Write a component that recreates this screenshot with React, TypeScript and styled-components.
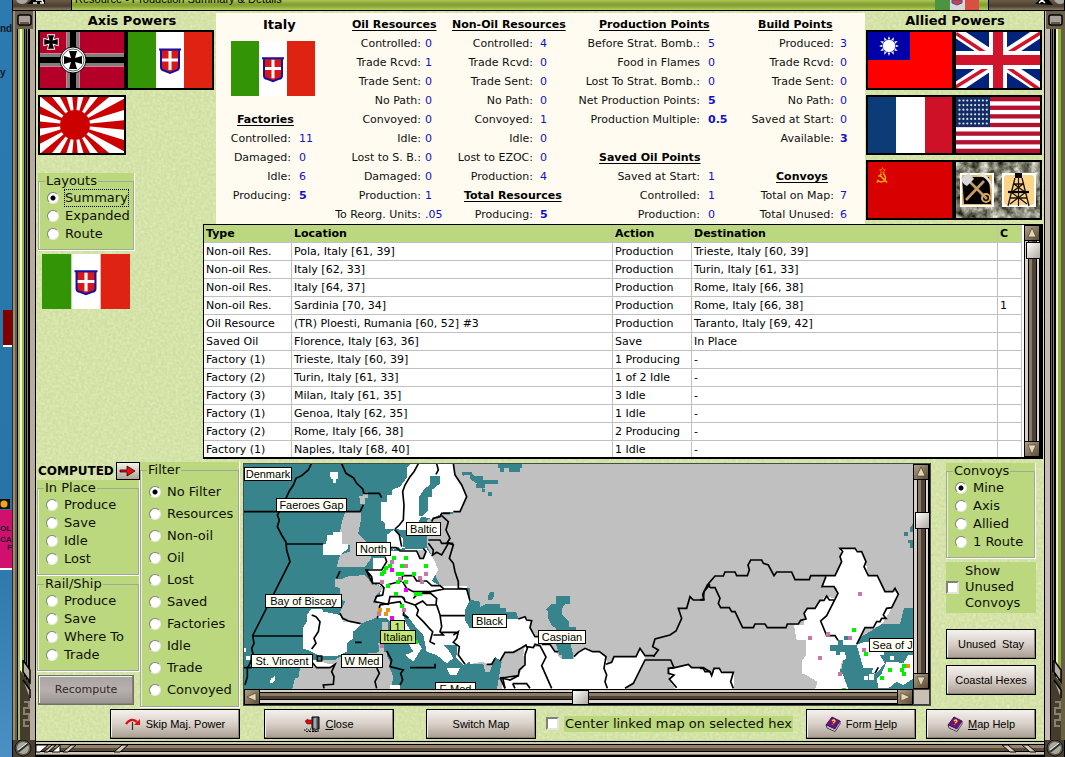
import React from "react";
import styled, { createGlobalStyle } from "styled-components";

const SANS = '"DejaVu Sans", sans-serif';
const UI = '"Liberation Sans", sans-serif';
const PANEL = "#bbd87e";
const SEA = "#38848c";
const LAND = "#c0c0c0";

const GlobalStyle = createGlobalStyle`
  * { box-sizing: border-box; }
  html, body { margin: 0; padding: 0; }
  body { font: 13px/16px ${SANS}; color: #101008; background: #2c78ac; overflow: hidden; }
`;

/* ---------- window shell ---------- */

const Shell = styled.div`
  display: grid;
  grid-template-columns: 12px 24px minmax(0, 1fr) 21px;
  grid-template-rows: 11px minmax(0, 1fr) 17px;
  min-height: 100vh;
`;

const Desktop = styled.div`
  grid-row: 1 / 4;
  position: relative;
  overflow: hidden;
  background: linear-gradient(#2c7ab0, #2874a8 70%, #4a90c4);
`;

const Fragment = styled.span<{ $y: number; $x: number; $size: number }>`
  position: absolute;
  top: ${(p) => p.$y}px;
  left: ${(p) => p.$x}px;
  font: bold ${(p) => p.$size}px/16px ${UI};
  color: #101830;
`;

const Counter = styled.div<{ $y: number; $x: number; $h: number; $c: string }>`
  position: absolute;
  top: ${(p) => p.$y}px;
  left: ${(p) => p.$x}px;
  right: 0;
  height: ${(p) => p.$h}px;
  background: ${(p) => p.$c};
  border-bottom: 2px solid #fff;
`;

const Marker = styled.svg`
  position: absolute;
  top: 499px;
  left: 0;
`;

const TitleBar = styled.header`
  grid-column: 2 / 5;
  display: grid;
  grid-template-columns: 60px minmax(0, 1fr) 77px;
  border-bottom: 1px solid #000;
  overflow: hidden;
`;

const Cap = styled.div`
  background: linear-gradient(#6a5c48, #4a3e2e 60%, #8a7c68);
  border: solid #000;
  border-width: 0 1px;
  overflow: hidden;
  svg { display: block; }
`;

const TitleStrip = styled.div`
  display: flex;
  justify-content: space-between;
  height: 10px;
  padding: 0 9px 0 3px;
  background: linear-gradient(#a8c858, #86a030 40%, #88a434 60%, #b4d060);
  overflow: hidden;
`;

const Title = styled.h1`
  margin: -9px 0 0;
  font: 11px/16px ${UI};
  color: #000;
`;

const Rail = styled.div<{ $right?: boolean }>`
  display: flex;
  flex-direction: column;
  justify-content: space-between;
  align-items: center;
  background: ${(p) =>
    p.$right
      ? "linear-gradient(90deg,#000 0 1px,#c8bcb0 1px 6px,#000 6px 7px,#6a6450 7px 8px,#000 8px 9px,#8a806c 9px 10px,#000 10px 12px,#eef4c8 12px 14px,#94b040 14px 17px,#5a6a20 17px 18px,#6a5e48 18px 21px)"
      : "linear-gradient(90deg,#30281c 0 1px,#9a8e74 1px 3px,#6a5e48 3px 5px,#000 5px 6px,#a8b870 6px 8px,#eef8c8 8px 10px,#98b44c 10px 12px,#000 12px 13px,#6a6450 13px 14px,#000 14px 15px,#8a806c 15px 16px,#000 16px 18px,#b8aca0 18px 23px,#000 23px 24px)"};
  svg { display: block; }
`;

const BottomRail = styled.div`
  grid-column: 3;
  background: linear-gradient(#c8d8a0 0 1px,#000 1px 2px,#d0c8b8 2px 4px,#000 4px 5px,#948468 5px 8px,#5a4a38 8px 11px,#000 11px 12px,#d0c8b8 12px 14px,#8a8070 14px 15px,#000 15px 17px);
  display: flex;
  justify-content: space-between;
  svg { display: block; }
`;

const BottomCorner = styled.div`
  background: #4a4030;
  border: solid #000;
  border-width: 0 1px;
  overflow: hidden;
  svg { display: block; }
`;

const Body = styled.main`
  position: relative;
  background: #cfdfa0;
  overflow: hidden;
`;

const Texture = styled.svg`
  position: absolute;
  inset: 0;
  width: 100%;
  height: 100%;
`;

const Content = styled.div`
  position: relative;
  display: flex;
  flex-direction: column;
  height: 100%;
`;

/* ---------- upper area ---------- */

const Upper = styled.div`
  display: grid;
  grid-template-columns: 167px 13px minmax(0, 1fr) 179px;
  grid-template-rows: auto auto;
`;

const AxisSide = styled.aside`
  grid-column: 1 / 3;
  grid-row: 1 / 3;
  padding-left: 2px;
`;

const AlliedSide = styled.aside`
  grid-column: 4;
  grid-row: 1;
  padding-left: 1px;
`;

const SideTitle = styled.h2<{ $indent?: number }>`
  margin: 0;
  padding: 1px 0 0 ${(p) => p.$indent || 0}px;
  font: bold 13px/18px ${SANS};
  text-align: center;
  color: #000;
`;

const FlagGrid = styled.div`
  display: grid;
  grid-template-columns: 88px 88px;
  gap: 5px 0;
`;

const FlagButton = styled.button`
  width: 88px;
  height: 60px;
  padding: 0;
  border: 2px solid #000;
  background: #808080;
  svg { display: block; width: 84px; height: 56px; }
`;

const StatsPanel = styled.section`
  grid-column: 3;
  grid-row: 1;
  margin-top: 2px;
  padding-top: 2px;
  background: #fffbf0;
  display: flex;
  justify-content: space-between;
`;

const StatColumn = styled.div<{ $label: number; $gap: number; $value: number }>`
  display: grid;
  grid-template-columns: ${(p) => p.$label}px ${(p) => p.$value}px;
  column-gap: ${(p) => p.$gap}px;
  grid-auto-rows: 19px;
  font: 11px/19px ${SANS};
  color: #101010;
  white-space: nowrap;
`;

const StatHead = styled.h3<{ $indent: number; $plain?: boolean }>`
  grid-column: 1 / 3;
  margin: 0;
  padding-left: ${(p) => p.$indent}px;
  font: bold ${(p) => (p.$plain ? 13 : 11)}px/19px ${SANS};
  text-decoration: ${(p) => (p.$plain ? "none" : "underline")};
  text-decoration-thickness: 1px;
  text-underline-offset: 2px;
  color: #000;
`;

const StatLabel = styled.span`
  display: flex;
  justify-content: flex-end;
`;

const StatValue = styled.span<{ $bold?: boolean }>`
  color: #1010c8;
  font-weight: ${(p) => (p.$bold ? "bold" : "normal")};
`;

const StatFlag = styled.div`
  grid-column: 1 / 3;
  grid-row: span 4;
  padding: 7px 0 0 15px;
  svg { display: block; width: 84px; height: 55px; }
`;

const StatGap = styled.div`
  grid-column: 1 / 3;
`;

/* ---------- groups and inputs ---------- */

const Panel = styled.div<{ $mt?: number; $w?: number }>`
  background: ${PANEL};
  margin-top: ${(p) => p.$mt || 0}px;
  width: ${(p) => (p.$w ? p.$w + "px" : "auto")};
  border-bottom: 1px solid #fff;
  border-right: 1px solid #fff;
`;

const Group = styled.fieldset<{ $row: number }>`
  margin: 0;
  min-width: 0;
  padding: ${(p) => (p.$row > 20 ? "3px 0 5px 8px" : "0 0 6px 8px")};
  border: 1px solid #a0a898;
  box-shadow: inset 1px 0 #e8f0d0;
  label { height: ${(p) => p.$row}px; }
`;

const Legend = styled.legend`
  margin-left: -2px;
  padding: 0 1px;
  font: 13px/16px ${SANS};
`;

const RadioRow = styled.label`
  display: flex;
  align-items: center;
  gap: 6px;
  white-space: nowrap;
`;

const RadioDot = styled.input`
  appearance: none;
  flex: none;
  width: 12px;
  height: 12px;
  margin: 0;
  border-radius: 50%;
  border: 1px solid;
  border-color: #808080 #e8e8e0 #e8e8e0 #808080;
  background: #fff;
  &:checked { background: radial-gradient(circle, #000 0 2px, #fff 3px); }
`;

const RadioText = styled.span<{ $focus?: boolean }>`
  outline: ${(p) => (p.$focus ? "1px dotted #000" : "none")};
`;

const Check = styled.input`
  appearance: none;
  flex: none;
  width: 13px;
  height: 13px;
  margin: 0;
  border: 2px solid;
  border-color: #808080 #e4e4dc #e4e4dc #808080;
  background: #fff;
`;

const PlainFlag = styled.div`
  margin: 3px 0 0 4px;
  svg { display: block; width: 88px; height: 55px; }
`;

/* ---------- table ---------- */

const TableBox = styled.section`
  grid-column: 2 / 5;
  grid-row: 2;
  display: flex;
  justify-content: space-between;
  height: 235px;
  margin-right: 1px;
  border: solid #000;
  border-width: 1px 2px 2px 1px;
  background: #fff;
  overflow: hidden;
`;

const Table = styled.table`
  flex: 1;
  min-width: 0;
  table-layout: fixed;
  border-collapse: separate;
  border-spacing: 0;
  font: 11px/17px ${SANS};
  color: #000;
  th, td {
    height: 18px;
    padding: 0 2px;
    text-align: left;
    white-space: nowrap;
    border-right: 1px solid #c0c0c0;
    border-bottom: 1px solid #c0c0c0;
  }
  th { background: ${PANEL}; font-weight: bold; }
`;

const Col = styled.col<{ $w: string }>`
  width: ${(p) => p.$w};
`;

/* ---------- scroll bars ---------- */

const VBar = styled.div<{ $thumb: number }>`
  position: relative;
  flex: none;
  width: 17px;
  margin-left: 2px;
  display: flex;
  flex-direction: column;
  justify-content: space-between;
  background: linear-gradient(90deg,#000 0 1px,#d8d0c4 1px 4px,#000 4px 5px,#8a7a64 5px 8px,#4e4232 8px 12px,#000 12px 13px,#e0d8d0 13px 15px,#000 15px 17px);
  &::after {
    content: "";
    position: absolute;
    left: 2px;
    top: ${(p) => p.$thumb}px;
    width: 13px;
    height: 15px;
    border: 1px solid #000;
    background: linear-gradient(135deg, #fff, #b0a8a0);
  }
`;

const HBar = styled.div`
  position: relative;
  flex: 1;
  display: flex;
  justify-content: space-between;
  background: linear-gradient(#000 0 1px,#d8d0c4 1px 3px,#000 3px 4px,#8a7a64 4px 7px,#4e4232 7px 10px,#000 10px 11px,#e0d8d0 11px 14px,#000 14px 16px);
  &::after {
    content: "";
    position: absolute;
    left: 49%;
    top: 1px;
    width: 15px;
    height: 13px;
    border: 1px solid #000;
    background: linear-gradient(135deg, #fff, #b0a8a0);
  }
`;

const ArrowBtn = styled.button`
  width: 16px;
  height: 16px;
  padding: 0;
  border: 1px solid #000;
  background: linear-gradient(135deg, #b0a084, #5a4c38);
  svg { display: block; width: 14px; height: 14px; }
`;

/* ---------- lower area ---------- */

const Lower = styled.div`
  flex: 1;
  min-height: 249px;
  display: grid;
  grid-template-columns: 104px 100px minmax(0, 1fr) 113px;
  padding-top: 3px;
`;

const LeftTools = styled.div`
  padding-left: 1px;
`;

const ComputedRow = styled.div`
  display: flex;
  justify-content: space-between;
  align-items: center;
  padding-left: 1px;
  height: 18px;
  font: bold 12px/16px ${SANS};
  color: #000;
`;

const Btn = styled.button<{ $w?: number; $font?: string; $gray?: boolean }>`
  display: flex;
  align-items: center;
  justify-content: center;
  gap: 5px;
  flex: none;
  width: ${(p) => (p.$w ? p.$w + "px" : "100%")};
  height: 30px;
  padding: 0;
  border: 1px solid ${(p) => (p.$gray ? "#707068" : "#000")};
  box-shadow: inset -1px -1px #8a8078, inset 1px 1px #f4f0ec;
  background: ${(p) =>
    p.$gray
      ? "linear-gradient(#a8a4a4, #b8b0ac 50%, #989494)"
      : "linear-gradient(#f4f0ec, #d8d0c8 50%, #a89c90)"};
  font: 11px/14px ${(p) => p.$font || UI};
  color: ${(p) => (p.$gray ? "#302828" : "#000")};
  white-space: pre;
`;

const ArrowGo = styled.button`
  width: 24px;
  height: 18px;
  padding: 0;
  border: 1px solid #000;
  background: linear-gradient(#f4f0ec, #b0a498);
  svg { display: block; margin: auto; }
`;

const RecomputeWrap = styled.div`
  padding: 3px 6px 0 1px;
`;

const MapBox = styled.section`
  display: flex;
  flex-direction: column;
  margin: 1px 0 2px 3px;
  border: 1px solid #405048;
  overflow: hidden;
`;

const MapRow = styled.div`
  flex: 1;
  min-height: 0;
  display: flex;
`;

const MapSvg = styled.svg`
  flex: 1;
  min-width: 0;
  height: 100%;
  display: block;
  background: ${LAND};
  text { font: 11px ${UI}; fill: #000; text-anchor: middle; }
`;

const MapVBar = styled(VBar)`
  margin-left: 0;
`;

const HRow = styled.div`
  display: flex;
  flex: none;
  height: 16px;
`;

const Corner = styled.div`
  width: 17px;
  background: #c8c0b4;
  border: 1px solid #403830;
`;

const RightTools = styled.div`
  padding: 1px 8px 0 15px;
`;

const ShowUnused = styled.label`
  display: flex;
  align-items: center;
  gap: 6px;
  margin: 3px 0 16px;
  padding: 1px 0 2px;
  background: ${PANEL};
  line-height: 16px;
`;

const Stack = styled.div`
  display: flex;
  flex-direction: column;
  gap: 6px;
`;

const ActionBar = styled.footer`
  display: flex;
  align-items: center;
  height: 32px;
  padding: 0 8px 1px 74px;
`;

const BtnGroup = styled.div<{ $gap: number; $ml: string }>`
  display: flex;
  align-items: center;
  gap: ${(p) => p.$gap}px;
  margin-left: ${(p) => p.$ml};
`;

const CenterLabel = styled.label`
  display: flex;
  align-items: center;
  gap: 5px;
  white-space: nowrap;
  span { background: ${PANEL}; padding: 0 1px; }
`;

/* ---------- flags ---------- */

const Italy = () => (
  <svg viewBox="0 0 84 56" preserveAspectRatio="none">
    <rect width="84" height="56" fill="#fff" />
    <rect width="28" height="56" fill="#339406" />
    <rect x="56" width="28" height="56" fill="#de2312" />
    <path d="M31 17.500H53M33 18V35Q33 38 36 38.500L42 41L48 38.500Q51 38 51 35V18" fill="#d81818" stroke="#1810a0" strokeWidth="2" />
    <path d="M42 19V38M34 28H50" stroke="#fff" strokeWidth="3" />
  </svg>
);

const cross = "M-2 -2L-4 -9H4L2 -2L9 -4V4L2 2L4 9H-4L-2 2L-9 4V-4Z";

const Germany = () => (
  <svg viewBox="0 0 84 56">
    <rect width="84" height="56" fill="#b40028" />
    <path d="M33 0V56M0 28H84" stroke="#fff" strokeWidth="13" />
    <path d="M33 0V56M0 28H84" stroke="#000" strokeWidth="11" />
    <path d="M33 0V56M0 28H84" stroke="#fff" strokeWidth="9" />
    <path d="M33 0V56M0 28H84" stroke="#000" strokeWidth="7" />
    <circle cx="33" cy="28" r="13" fill="#fff" stroke="#000" />
    <circle cx="33" cy="28" r="11" fill="#fff" stroke="#606060" />
    <path d={cross} transform="translate(33 28)" fill="#000" />
    <path d={cross} transform="translate(11 10) scale(.75)" fill="#000" stroke="#fff" strokeWidth="2.500" paintOrder="stroke" />
  </svg>
);

const Japan = () => {
  const rays = Array.from({ length: 16 }, (_, i) => {
    const a = ((i * 22.5 - 5.6) * Math.PI) / 180;
    const b = ((i * 22.5 + 5.6) * Math.PI) / 180;
    return `M35 28L${35 + 90 * Math.cos(a)} ${28 + 90 * Math.sin(a)}L${35 + 90 * Math.cos(b)} ${28 + 90 * Math.sin(b)}Z`;
  }).join("");
  return (
    <svg viewBox="0 0 84 56">
      <rect width="84" height="56" fill="#fff" />
      <path d={rays} fill="#cc0000" />
      <circle cx="35" cy="28" r="15" fill="#cc0000" />
    </svg>
  );
};

const China = () => {
  const pts = Array.from({ length: 24 }, (_, i) => {
    const r = i % 2 ? 6 : 10;
    const a = (i * Math.PI) / 12;
    return `${21 + r * Math.sin(a)},${14 - r * Math.cos(a)}`;
  }).join(" ");
  return (
    <svg viewBox="0 0 84 56">
      <rect width="84" height="56" fill="#fe0000" />
      <rect width="42" height="28" fill="#0000a8" />
      <polygon points={pts} fill="#fff" />
      <circle cx="21" cy="14" r="6.500" fill="none" stroke="#0000a8" strokeWidth=".7" />
      <circle cx="21" cy="14" r="5.800" fill="#fff" />
    </svg>
  );
};

const Britain = () => (
  <svg viewBox="0 0 84 56">
    <rect width="84" height="56" fill="#00247d" />
    <path d="M0 0L84 56M84 0L0 56" stroke="#fff" strokeWidth="11" />
    <path d="M0 1.500L40 28M86 0L44 26M-2 56L40 30M84 58L44 30" stroke="#cf142b" strokeWidth="3.500" />
    <path d="M42 0V56M0 28H84" stroke="#fff" strokeWidth="18" />
    <path d="M42 0V56M0 28H84" stroke="#cf142b" strokeWidth="10" />
  </svg>
);

const France = () => (
  <svg viewBox="0 0 84 56">
    <rect width="84" height="56" fill="#fff" />
    <rect width="28" height="56" fill="#0c3c78" />
    <rect x="57" width="27" height="56" fill="#ce1126" />
  </svg>
);

const America = () => (
  <svg viewBox="0 0 84 56">
    <rect width="84" height="56" fill="#fff" />
    {[0, 1, 2, 3, 4, 5, 6].map((i) => (
      <rect key={i} y={i * 8.62} width="84" height="4.300" fill="#b41030" />
    ))}
    <rect width="34" height="30" fill="#142c64" />
    {Array.from({ length: 48 }, (_, i) => (
      <circle key={i} cx={3.5 + (i % 8) * 3.9} cy={3.5 + Math.floor(i / 8) * 4.6} r="1.100" fill="#d8e0f0" />
    ))}
  </svg>
);

const Soviet = () => (
  <svg viewBox="0 0 84 56">
    <rect width="84" height="56" fill="#d80000" />
    <path d="M14.500 5.500L15.300 7.800H17.500L15.800 9.200L16.300 11.300L14.500 10L12.700 11.300L13.200 9.200L11.500 7.800H13.700Z" fill="none" stroke="#ff9000" strokeWidth=".7" />
    <path d="M15 11.500Q19.500 15.500 16 19Q13 21 10 18.500L9 20.500M10.500 14.500L13.500 12M12 13.500L19 20.500" fill="none" stroke="#ffc000" strokeWidth="1.400" />
  </svg>
);

const Industry = () => (
  <svg viewBox="0 0 84 56">
    <filter id="rock" x="0" y="0" width="1" height="1" colorInterpolationFilters="sRGB">
      <feTurbulence type="fractalNoise" baseFrequency=".12" numOctaves="4" seed="4" />
      <feColorMatrix values="1.3 0 0 0 -.12 1.300 0 0 0 -.12 1.300 0 0 0 -.18 0 0 0 0 1" />
    </filter>
    <rect width="84" height="56" filter="url(#rock)" />
    <rect x="4" y="11" width="34" height="34" fill="#fff" />
    <rect x="6" y="13" width="30" height="30" fill="#e8b860" />
    <path d="M6 15H33L35 42H8Z" fill="#000" />
    <path d="M10 38L28 19M14 20L31 37" stroke="#c89c60" strokeWidth="2.600" />
    <path d="M5 16L13 11L18 17L11 24Q6 22 5 16Z" fill="#d8d8d8" />
    <path d="M20 13Q32 14 36 28L36 23Q33 13 25 11Z" fill="#e4e4e4" />
    <circle cx="30" cy="36" r="4" fill="none" stroke="#d8a868" strokeWidth="2" />
    <rect x="46" y="11" width="34" height="34" fill="#fff" />
    <rect x="48" y="13" width="30" height="30" rx="3" fill="#fcd488" />
    <path d="M59 11H66V16H59Z" fill="#000" />
    <path d="M59 16L52 44M66 16L73 44M58 22L69 30M67 22L56 30M55 30L71 42M70 30L54 42M57 22H68M54 36H71" fill="none" stroke="#181008" strokeWidth="1.300" />
    <path d="M52 30H73" stroke="#000" strokeWidth="2.200" />
    <path d="M62.500 12V44" stroke="#181008" strokeWidth="1.200" />
  </svg>
);

/* ---------- small drawings ---------- */

const Screw = () => (
  <svg width="21" height="17" viewBox="0 0 21 17">
    <circle cx="10" cy="8" r="8" fill="#585850" stroke="#181410" />
    <circle cx="10" cy="8" r="6" fill="#a8a8a0" />
    <path d="M5 12L15 4" stroke="#303028" strokeWidth="2" />
    <path d="M5 10L14 3" stroke="#e8e8e0" />
  </svg>
);

const Bolt = () => (
  <svg width="18" height="18" viewBox="0 0 18 18">
    <path d="M0 0H18V18H0Z" fill="#6a5e4c" />
    <rect x="3" y="4" width="13" height="10" rx="2" fill="#a8a098" stroke="#000" strokeWidth="1.500" />
    <path d="M5 12H14" stroke="#605848" strokeWidth="2" />
  </svg>
);

const Ratchet = () => (
  <svg width="20" height="80" viewBox="0 0 20 80">
    <path d="M6 10L16 24V80H6Z" fill="#443c2c" />
    <path d="M9 0L16 10V22L9 12ZM9 20L16 30V38" fill="#b8b0a0" stroke="#000" strokeWidth="1.500" />
    <path d="M10 42H15V48H10V54H15V60H10V66H15" fill="none" stroke="#8a8070" strokeWidth="2" />
  </svg>
);

const Slashes = () => (
  <svg width="130" height="17" viewBox="0 0 130 17">
    <path d="M0 5H12L4 12H0ZM16 12L24 5V12Z" fill="#fff" stroke="#000" />
    <path d="M8 12L16 5H20L12 12ZM27 12L35 5H40L32 12ZM78 12L86 5H92L84 12Z" fill="#d0c8b8" stroke="#000" />
  </svg>
);

const SlashesRight = () => (
  <svg width="42" height="17" viewBox="0 0 42 17">
    <path d="M0 5H6L14 12H8ZM20 5H26L34 12H28Z" fill="#d0c8b8" stroke="#000" />
  </svg>
);

const Tri = ({ d }: { d: string }) => (
  <svg viewBox="0 0 14 14">
    <path d={d} fill="#e4d8b4" stroke="#403420" strokeWidth=".6" />
  </svg>
);
const UP = "M7 2L11 11H3Z";
const DOWN = "M7 12L11 3H3Z";
const LEFT = "M2 7L11 3V11Z";
const RIGHT = "M12 7L3 3V11Z";

const SkipIcon = () => (
  <svg width="16" height="14" viewBox="0 0 16 14">
    <path d="M1 7Q6 0 12 5" fill="none" stroke="#e01010" strokeWidth="2.400" />
    <path d="M15 2V8H9Z" fill="#e01010" />
    <path d="M7.500 5V13" stroke="#303030" strokeWidth="1.200" />
  </svg>
);

const DoorIcon = () => (
  <svg width="16" height="16" viewBox="0 0 16 16">
    <path d="M8 1H15V13H8Z" fill="#585860" stroke="#000" />
    <path d="M9 2L13 1V14L9 12Z" fill="#a0a8b0" stroke="#202020" strokeWidth=".7" />
    <path d="M1 5L4 3V4H8V8H5L3 8Z" fill="#d01010" stroke="#600" strokeWidth=".5" />
    <path d="M0 14H2V13H4V14H6V13H8V14H10V15H15M2 15.500H13" stroke="#000" strokeDasharray="2 1" fill="none" />
    <path d="M1 13H8" stroke="#fff" strokeDasharray="1 1" />
  </svg>
);

const BookIcon = () => (
  <svg width="16" height="16" viewBox="0 0 16 16">
    <path d="M1 9L7 1L15 5L10 13Z" fill="#70107c" stroke="#2c0030" strokeWidth=".8" />
    <path d="M1 9L10 13L15 5V8L10 15.500L2 12Z" fill="#e8e8f0" stroke="#301038" strokeWidth=".8" />
    <path d="M2 10.500L10 14.200L15 7" stroke="#8888a0" strokeWidth=".6" fill="none" />
    <path d="M7 5Q9 3 10 5Q10 6 8 7M7.500 8.500V9" stroke="#ffd820" strokeWidth="1.400" fill="none" />
  </svg>
);

/* ---------- map ---------- */

type Dot = [number, number, string];
const G = "#00f000";
const P = "#c878a8";
const M = "#f000f0";
const O = "#e09810";

const westDots: Dot[] = [
  [456, 303, G], [492, 303, G], [450, 315, P], [444, 327, G], [432, 333, G], [426, 345, G], [420, 351, G], [480, 327, G], [492, 327, P],
  [450, 339, M], [468, 351, G], [480, 351, G], [516, 351, G], [552, 327, G], [552, 351, P], [534, 363, P], [540, 375, P], [474, 366, P],
  [492, 375, G], [468, 375, G], [438, 387, G], [420, 375, P], [492, 399, M], [462, 411, G], [522, 411, G], [534, 411, G], [480, 447, G],
  [486, 459, P], [414, 459, O], [438, 459, O], [432, 471, O], [410, 471, P], [450, 483, M], [420, 567, P], [522, 555, G],
];
const eastDots: Dot[] = [
  [474, 411, P], [456, 519, G], [378, 531, P], [324, 543, P], [444, 543, P], [486, 579, P], [492, 591, G], [354, 603, P], [414, 651, P],
  [564, 639, G], [606, 627, G], [600, 639, G], [606, 651, G], [618, 627, O], [540, 663, G], [426, 698, G],
];

const Dots = ({ list }: { list: Dot[] }) => (
  <>
    {list.map(([x, y, c], i) => (
      <rect key={i} x={x} y={y} width="12" height="12" fill={c} />
    ))}
  </>
);

const labels: [string, number, number, number, string?][] = [
  ["Denmark", 0, 3, 47],
  ["Faeroes Gap", 32, 34, 70],
  ["Baltic", 162, 58, 34],
  ["North", 112, 78, 34],
  ["Bay of Biscay", 21, 130, 76],
  ["Black", 228, 150, 34],
  ["Caspian", 294, 166, 47],
  ["St. Vincent", 7, 190, 61],
  ["W Med", 97, 190, 41],
  ["E Med", 191, 218, 40],
  ["1", 146, 156, 14, "#c4e878"],
  ["Italian", 136, 166, 35, "#c4e878"],
  ["Sea of J", 625, 174, 46],
];

const WorldMap = () => (
  <MapSvg viewBox="0 0 669 225" preserveAspectRatio="xMinYMin slice" role="img" aria-label="Resource map">
    <g transform="translate(-4 -9) scale(.33333)" shapeRendering="crispEdges">
      <path d="M12 26H640V176L620 190V260L640 300V400H690V706H12Z" fill={SEA} />
      <path d="M560 195L605 178H640V340L655 400L600 392L590 370L575 300L560 270V240Z" fill={LAND} />
      <path d="M512 26H640L645 60L665 90L680 125L660 170L610 172L575 192L545 184L536 200L540 270L480 282L440 240L465 222H435V205L422 195V140H440V120H455V105L480 95L500 68V40Z" fill="#fff" />
      <path d="M570 62H600V85L575 105V125H565V165L550 182H537V125L555 100L570 90Z" fill={SEA} />
      <path d="M455 222L490 250V275L510 285L540 275L560 240L500 240V225Z" fill={SEA} />
      <path d="M440 240L460 230L478 245L485 270L460 285L440 262Z" fill="#fff" />
      <path d="M270 50H295V72H288V85H280V72H272Z" fill="#fff" />
      <path d="M358 122H370V110H384V130H375V148H360Z" fill={LAND} />
      <path d="M315 172H362V200L355 235L378 260L360 300H392V312L375 335H290L300 300L330 290V270L302 268L300 230L306 200Z" fill={LAND} />
      <path d="M262 240H278V232H305V268H325V280L300 300H248V268H258Z" fill="#fff" />
      <path d="M380 345L400 340V310H430L450 290L500 283L560 280L580 310L595 345L575 378L600 392H680L690 437L680 470V495L700 520V550L690 620L672 630L650 610L640 570L620 575L640 610L620 625L590 600L560 590L550 540L530 520L500 480L490 470L495 500L545 580L520 620L495 600L520 590L490 540L440 490L412 490V455L400 440L420 420L425 395L395 380Z" fill="#fff" />
      <path d="M285 372H305L320 365L375 360L395 385L430 398L405 425L418 455L412 487L360 507L310 500L300 470L316 440L300 430V400L285 395Z" fill={LAND} />
      <path d="M214 462H245L250 470L300 480L310 500L365 507L340 530V550L320 565V590L290 604H240L215 590L188 580V520L200 500V480Z" fill="#fff" />
      <path d="M535 285H555V305H535Z" fill={LAND} />
      <path d="M415 565H432V590H442V615H420ZM425 500H445V525H425Z" fill={LAND} />
      <path d="M180 640L215 616H285L300 605L435 590L450 620V640L460 665L455 690L480 706H156L165 670H175Z" fill={LAND} />
      <path d="M215 616H245L255 625L285 628L270 640H225Z" fill="#fff" />
      <path d="M450 690H480V702H450ZM620 640H660L650 660H630ZM92 672L105 662V675L98 685H90ZM12 578H18V590H12ZM18 602H30V614H18Z" fill="#fff" />
      <path d="M610 570H650V600H640L625 585ZM665 50H695V62L720 68V75L700 72L690 60L668 62Z" fill={SEA} />
      <path d="M690 435L675 465V495L690 520H720V440Z" fill={SEA} />
      <g fill="none" stroke="#000" strokeWidth="5" shapeRendering="auto">
        <path d="M214 26L205 45L185 62L168 70L160 90L148 108L138 130L118 170L112 180L118 195L112 215L125 240L138 262L140 285L150 320L38 542L42 565L35 580L40 600L30 625L22 640V665L15 690" />
        <path d="M12 170H360L370 150M305 26L318 55L340 68L350 85L368 102L372 115H418L425 128M138 267H250M38 543H188M12 638H35" />
        <path d="M535 26L522 50L510 65L495 90L488 110L492 150L490 195L478 210L465 222M465 225L478 240L485 275M590 26L595 45L588 58M640 26L645 60L665 90L680 125L660 170H640M630 175H605L600 185L580 190L575 200M605 182L625 200L618 225L630 250L622 262L640 270L628 310L640 325L645 350L655 380V400L680 402L690 437" />
        <path d="M565 255H600L605 265H640M565 265L580 285L578 300L590 292L605 300L625 265M450 278H468L480 288H530L540 310H550L558 290L550 280M435 305L440 320L425 345H378L398 385H420L432 398L428 420L410 424L403 440L445 448L450 425H485L495 435M378 345L395 365L398 388M300 348L290 370" />
        <path d="M485 375L488 362H520L530 378H560L575 392H600L612 402L572 410H520L500 400L488 380M612 402H680M520 430L535 415H572L590 430L588 450H560L548 438L525 450L495 440L490 425M590 450L600 480L605 515L600 530L610 540H580M600 482H675M600 532H650M525 450L535 465L530 480L550 500L568 520L578 530L570 560L585 568M412 490L420 450L480 440L492 465L490 480L505 488" />
        <path d="M640 540L655 530L650 550L640 562L658 575L655 600L675 628M215 480L228 485L240 500L235 530L222 550L228 565L215 582M300 475L308 490L325 498L362 506M232 603H245V618H232ZM215 620L230 638H270L285 628L275 650L282 665L280 688L250 690L252 700M410 638L418 655L405 680L410 700M440 588L455 615L450 635L490 645L482 655L488 675L480 690M510 638H585V626" />
        <path d="M345 562H365M440 390L485 378" />
      </g>
      <Dots list={westDots} />
    </g>
    <g transform="translate(226 -9) scale(.33333)" shapeRendering="crispEdges">
      <path d="M84 26H155V38H150V50H118V40H102V50H90V38H84ZM0 52L12 62H40V74H84V86H46V98H36L46 104V110H36V98H18V88H24L0 72ZM54 111H66V122H54ZM60 411H72V422L66 434H54V424ZM0 435H12V447H24V458L48 447H90V460H108V470H138L145 492H0ZM258 423H300V447H285L276 460V480L298 500V515H318V525L300 560L310 600V612H275V600L258 570V520L246 512L234 490V470L228 465L246 447H258Z" fill={SEA} />
      <path d="M0 518H105L110 492H145L162 485L185 500L180 518L205 550V566L190 575L165 572L145 588L105 592L90 618L50 628L40 620L0 627Z" fill="#fff" />
      <path d="M0 627H40L45 650H60L75 606L95 620L90 650L80 706H0Z" fill={SEA} />
      <path d="M165 572L190 575H205L215 568L240 570L255 590L275 612H310L325 592L345 580L368 590H388L408 605L412 628L425 622L432 605H498L510 580L525 602V615L490 685L465 706H95V685L98 665L145 660L165 630L160 600Z" fill="#fff" />
      <path d="M600 640L655 628L665 638H700L720 655V706H620L600 680Z" fill="#fff" />
      <path d="M258 568H300L310 600V612H276V600H268Z" fill={SEA} />
      <g fill="none" stroke="#000" strokeWidth="5" shapeRendering="auto">
        <path d="M145 492L165 485L170 495L185 497L180 518L195 545H210M50 628H65L75 610M90 618L105 592H130L155 578L168 570L172 580L165 600V630L148 645L145 662L98 668L105 700M170 575L190 578L195 568L210 572L228 606L215 632L245 700M215 568H240L255 590H265M312 605L325 592L345 580L368 590H388L408 605L402 640L410 660L405 680L412 700M408 628L425 622L432 605H498L510 580L525 602H555" />
        <path d="M465 700L490 685L525 615H602L612 638L595 640V655L612 660L598 672L620 698M605 640L655 628L665 638H700L720 650M550 605L565 585L548 575L555 552L600 540L618 528L635 490L625 460H650L660 425L670 435H700L702 410L720 388M90 668L105 700M128 686H170L180 700M128 686L135 700M90 668L120 675L145 662" />
      </g>
    </g>
    <g transform="translate(456 -9) scale(.33333)" shapeRendering="crispEdges">
      <path d="M612 231H624V243H612ZM630 219L640 205V279H630V265H624V255H640V231H630ZM612 460H640V706H350V670L430 640V570L460 560L545 508H600Z" fill={SEA} />
      <path d="M282 510H312V495L320 460H345L375 425L412 430V400H368L378 363H405L425 320L420 280H465L490 295L498 325L505 362H535L555 410H578L595 415L585 440L558 490L545 508L520 520L495 518L470 568L500 560L540 575V600L555 625L530 655L510 658L520 640H485L480 610L460 580H430L440 610L425 620L420 650L432 660L445 706H345L352 680L318 660L305 655V620L318 600V555H290Z" fill="#fff" />
      <path d="M390 570H415V556H430V570H470L490 640L530 660L510 702H445L425 650V630L450 610V590H420V600H408V588H390ZM432 543H455V554H432Z" fill={SEA} />
      <path d="M570 603H582V615H570ZM492 663H504V675H492ZM530 672L545 655L560 620H585L610 625L625 600H640V670L610 690L590 680L565 700L535 698ZM508 658H522V675H508ZM538 585H552V600H538Z" fill="#fff" />
      <path d="M0 640H12L20 655H40L45 640H60L70 652H102V706H0Z" fill="#fff" />
      <g fill="none" stroke="#000" strokeWidth="5" shapeRendering="auto">
        <path d="M0 434H12L8 418L22 390L45 363H70L75 351H105L110 362H142L148 345L144 330L152 315H185L190 325L205 330L222 362L230 351H275L285 374H328L332 362H405L425 320L420 305L428 290L420 280H465L472 290H485L498 320L492 335L505 362H532L555 410H578L585 400L595 418L575 458L560 460L550 480L558 490H545L540 500H530L520 518H495L470 568" />
        <path d="M22 390L32 398H45L60 430L55 445L62 458H88L95 470H105L128 518H160L165 507H195L202 518H258L262 507H295L302 496L318 492L312 475L322 460H345L360 436H372L380 423L388 435H402M378 364L366 395H402L414 415L380 482L362 498L380 542H405L414 556M0 640H10L15 650H30L35 662L42 640H58L65 652H100L92 680L100 700M525 655L535 637" />
      </g>
      <Dots list={eastDots} />
    </g>
    {labels.map(([t, x, y, w, fill]) => (
      <g key={t}>
        <rect x={x + 0.5} y={y + 0.5} width={w} height="13" fill={fill || "#fffff4"} stroke="#000" />
        <text x={x + w / 2 + 0.5} y={y + 11}>{t}</text>
      </g>
    ))}
  </MapSvg>
);

/* ---------- data ---------- */

type Line = [string, string, boolean?];
const Lines = ({ rows }: { rows: Line[] }) => (
  <>
    {rows.map(([l, v, b]) => (
      <React.Fragment key={l}>
        <StatLabel>{l}</StatLabel>
        <StatValue $bold={b}>{v}</StatValue>
      </React.Fragment>
    ))}
  </>
);

const tableRows = [
  ["Non-oil Res.", "Pola, Italy [61, 39]", "Production", "Trieste, Italy [60, 39]", ""],
  ["Non-oil Res.", "Italy [62, 33]", "Production", "Turin, Italy [61, 33]", ""],
  ["Non-oil Res.", "Italy [64, 37]", "Production", "Rome, Italy [66, 38]", ""],
  ["Non-oil Res.", "Sardinia [70, 34]", "Production", "Rome, Italy [66, 38]", "1"],
  ["Oil Resource", "(TR) Ploesti, Rumania [60, 52] #3", "Production", "Taranto, Italy [69, 42]", ""],
  ["Saved Oil", "Florence, Italy [63, 36]", "Save", "In Place", ""],
  ["Factory (1)", "Trieste, Italy [60, 39]", "1 Producing", "-", ""],
  ["Factory (2)", "Turin, Italy [61, 33]", "1 of 2 Idle", "-", ""],
  ["Factory (3)", "Milan, Italy [61, 35]", "3 Idle", "-", ""],
  ["Factory (1)", "Genoa, Italy [62, 35]", "1 Idle", "-", ""],
  ["Factory (2)", "Rome, Italy [66, 38]", "2 Producing", "-", ""],
  ["Factory (1)", "Naples, Italy [68, 40]", "1 Idle", "-", ""],
];

interface RadioGroupProps {
  title: string;
  items: string[];
  checked?: string;
  focus?: string;
  row?: number;
  mt?: number;
  w?: number;
}

const RadioGroup = ({ title, items, checked, focus, row = 18, mt, w }: RadioGroupProps) => (
  <Panel $mt={mt} $w={w}>
    <Group $row={row}>
      <Legend>{title}</Legend>
      {items.map((t) => (
        <RadioRow key={t}>
          <RadioDot type="radio" name={title} defaultChecked={t === checked} />
          <RadioText $focus={t === focus}>{t}</RadioText>
        </RadioRow>
      ))}
    </Group>
  </Panel>
);

export default function App() {
  return (
    <>
      <GlobalStyle />
      <Shell>
        <Desktop>
          <Fragment $x={0} $y={21} $size={10}>nd</Fragment>
          <Fragment $x={0} $y={65} $size={10}>y</Fragment>
          <Counter $x={3} $y={310} $h={37} $c="#800000" />
          <Marker width="10" height="10" viewBox="0 0 10 10">
            <rect width="10" height="10" fill="#181008" />
            <circle cx="4" cy="5" r="3.500" fill="#f0a818" />
          </Marker>
          <Counter $x={0} $y={510} $h={60} $c="#d0106c" />
          <Fragment $x={0} $y={521} $size={8}>OL</Fragment>
          <Fragment $x={0} $y={532} $size={8}>CA</Fragment>
          <Fragment $x={7} $y={540} $size={8}>F</Fragment>
        </Desktop>

        <TitleBar>
          <Cap>
            <svg width="60" height="10" viewBox="0 0 60 10">
              <circle cx="9" cy="-2" r="6" fill="#a8a8a0" />
              <path d="M14 4L18 0H32V4Z" fill="#000" />
              <path d="M20 3H24M27 3H31M23 0H29L30 3" stroke="#fff" strokeWidth="1.500" fill="none" />
            </svg>
          </Cap>
          <TitleStrip>
            <Title>Resource - Production Summary &amp; Details</Title>
            <svg width="44" height="10" viewBox="0 0 44 10">
              <path d="M0 0H15V10H0Z" fill="#4c9440" />
              <path d="M15 0H30V10H15Z" fill="#d8d8d8" />
              <path d="M30 0H44V10H30Z" fill="#d85040" />
              <path d="M17 0H27V3L22 5L17 3Z" fill="#d04040" stroke="#4050a0" />
            </svg>
          </TitleStrip>
          <Cap>
            <svg width="77" height="10" viewBox="0 0 77 10">
              <path d="M46 4L50 0H60L64 5Z" fill="#000" />
              <path d="M50 3L53 0L56 3" stroke="#fff" strokeWidth="1.500" fill="none" />
              <circle cx="71" cy="-2" r="6" fill="#a8a8a0" />
            </svg>
          </Cap>
        </TitleBar>

        <Rail>
          <Bolt />
          <Ratchet />
        </Rail>

        <Body>
          <Texture aria-hidden="true">
            <filter id="grain" x="0" y="0" width="1" height="1" colorInterpolationFilters="sRGB">
              <feTurbulence type="fractalNoise" baseFrequency=".35" numOctaves="2" seed="3" />
              <feColorMatrix values="0 0 0 0 .9 0 0 0 0 .94 0 0 0 0 .76 1.400 0 0 0 -.45" />
            </filter>
            <rect width="100%" height="100%" filter="url(#grain)" />
          </Texture>
          <Content>
            <Upper>
              <AxisSide>
                <SideTitle $indent={10}>Axis Powers</SideTitle>
                <FlagGrid>
                  <FlagButton aria-label="Germany"><Germany /></FlagButton>
                  <FlagButton aria-label="Italy"><Italy /></FlagButton>
                  <FlagButton aria-label="Japan"><Japan /></FlagButton>
                </FlagGrid>
                <RadioGroup title="Layouts" items={["Summary", "Expanded", "Route"]} checked="Summary" focus="Summary" mt={18} w={97} />
                <PlainFlag><Italy /></PlainFlag>
              </AxisSide>

              <StatsPanel>
                <StatColumn $label={75} $gap={8} $value={25}>
                  <StatHead $indent={47} $plain>Italy</StatHead>
                  <StatFlag><Italy /></StatFlag>
                  <StatHead $indent={21}>Factories</StatHead>
                  <Lines rows={[["Controlled:", "11"], ["Damaged:", "0"], ["Idle:", "6"], ["Producing:", "5", true]]} />
                </StatColumn>
                <StatColumn $label={97} $gap={4} $value={17}>
                  <StatHead $indent={28}>Oil Resources</StatHead>
                  <Lines
                    rows={[["Controlled:", "0"], ["Trade Rcvd:", "1"], ["Trade Sent:", "0"], ["No Path:", "0"], ["Convoyed:", "0"], ["Idle:", "0"], ["Lost to S. B.:", "0"], ["Damaged:", "0"], ["Production:", "1"], ["To Reorg. Units:", ".05"]]}
                  />
                </StatColumn>
                <StatColumn $label={91} $gap={7} $value={31}>
                  <StatHead $indent={10}>Non-Oil Resources</StatHead>
                  <Lines
                    rows={[["Controlled:", "4"], ["Trade Rcvd:", "0"], ["Trade Sent:", "0"], ["No Path:", "0"], ["Convoyed:", "1"], ["Idle:", "0"], ["Lost to EZOC:", "0"], ["Production:", "4"]]}
                  />
                  <StatHead $indent={22}>Total Resources</StatHead>
                  <Lines rows={[["Producing:", "5", true]]} />
                </StatColumn>
                <StatColumn $label={129} $gap={8} $value={20}>
                  <StatHead $indent={28}>Production Points</StatHead>
                  <Lines
                    rows={[["Before Strat. Bomb.:", "5"], ["Food in Flames", "0"], ["Lost To Strat. Bomb.:", "0"], ["Net Production Points:", "5", true], ["Production Multiple:", "0.5", true]]}
                  />
                  <StatGap />
                  <StatHead $indent={28}>Saved Oil Points</StatHead>
                  <Lines rows={[["Saved at Start:", "1"], ["Controlled:", "1"], ["Production:", "0"]]} />
                </StatColumn>
                <StatColumn $label={106} $gap={6} $value={25}>
                  <StatHead $indent={30}>Build Points</StatHead>
                  <Lines
                    rows={[["Produced:", "3"], ["Trade Rcvd:", "0"], ["Trade Sent:", "0"], ["No Path:", "0"], ["Saved at Start:", "0"], ["Available:", "3", true]]}
                  />
                  <StatGap />
                  <StatHead $indent={48}>Convoys</StatHead>
                  <Lines rows={[["Total on Map:", "7"], ["Total Unused:", "6"]]} />
                </StatColumn>
              </StatsPanel>

              <AlliedSide>
                <SideTitle>Allied Powers</SideTitle>
                <FlagGrid>
                  <FlagButton aria-label="China"><China /></FlagButton>
                  <FlagButton aria-label="United Kingdom"><Britain /></FlagButton>
                  <FlagButton aria-label="France"><France /></FlagButton>
                  <FlagButton aria-label="United States"><America /></FlagButton>
                  <FlagButton aria-label="Soviet Union"><Soviet /></FlagButton>
                  <FlagButton aria-label="Resources"><Industry /></FlagButton>
                </FlagGrid>
              </AlliedSide>

              <TableBox>
                <Table>
                  <colgroup>
                    <Col $w="88px" />
                    <Col $w="auto" />
                    <Col $w="79px" />
                    <Col $w="306px" />
                    <Col $w="24px" />
                  </colgroup>
                  <thead>
                    <tr>
                      <th>Type</th>
                      <th>Location</th>
                      <th>Action</th>
                      <th>Destination</th>
                      <th>C</th>
                    </tr>
                  </thead>
                  <tbody>
                    {tableRows.map((r, i) => (
                      <tr key={i}>
                        {r.map((c, j) => (
                          <td key={j}>{c}</td>
                        ))}
                      </tr>
                    ))}
                  </tbody>
                </Table>
                <VBar $thumb={17}>
                  <ArrowBtn aria-label="Scroll up"><Tri d={UP} /></ArrowBtn>
                  <ArrowBtn aria-label="Scroll down"><Tri d={DOWN} /></ArrowBtn>
                </VBar>
              </TableBox>
            </Upper>

            <Lower>
              <LeftTools>
                <ComputedRow>
                  COMPUTED
                  <ArrowGo aria-label="Compute">
                    <svg width="18" height="12" viewBox="0 0 18 12">
                      <path d="M1 5H8V1L16 6L8 11V7H1Z" fill="#e81010" stroke="#300" strokeWidth=".8" />
                    </svg>
                  </ArrowGo>
                </ComputedRow>
                <RadioGroup title="In Place" items={["Produce", "Save", "Idle", "Lost"]} />
                <RadioGroup title="Rail/Ship" items={["Produce", "Save", "Where To", "Trade"]} />
                <RecomputeWrap>
                  <Btn $gray $font={SANS}>Recompute</Btn>
                </RecomputeWrap>
              </LeftTools>

              <RadioGroup
                title="Filter"
                items={["No Filter", "Resources", "Non-oil", "Oil", "Lost", "Saved", "Factories", "Idle", "Trade", "Convoyed"]}
                checked="No Filter"
                row={22}
              />

              <MapBox>
                <MapRow>
                  <WorldMap />
                  <MapVBar $thumb={48}>
                    <ArrowBtn aria-label="Pan up"><Tri d={UP} /></ArrowBtn>
                    <ArrowBtn aria-label="Pan down"><Tri d={DOWN} /></ArrowBtn>
                  </MapVBar>
                </MapRow>
                <HRow>
                  <HBar>
                    <ArrowBtn aria-label="Pan left"><Tri d={LEFT} /></ArrowBtn>
                    <ArrowBtn aria-label="Pan right"><Tri d={RIGHT} /></ArrowBtn>
                  </HBar>
                  <Corner />
                </HRow>
              </MapBox>

              <RightTools>
                <RadioGroup title="Convoys" items={["Mine", "Axis", "Allied", "1 Route"]} checked="Mine" />
                <ShowUnused>
                  <Check type="checkbox" />
                  <span>Show<br />Unused<br />Convoys</span>
                </ShowUnused>
                <Stack>
                  <Btn>Unused  Stay</Btn>
                  <Btn>Coastal Hexes</Btn>
                </Stack>
              </RightTools>
            </Lower>

            <ActionBar>
              <BtnGroup $gap={24} $ml="0">
                <Btn $w={130}><SkipIcon />Skip Maj. Power</Btn>
                <Btn $w={130}><DoorIcon /><span><u>C</u>lose</span></Btn>
              </BtnGroup>
              <BtnGroup $gap={10} $ml="32px">
                <Btn $w={110}>Switch Map</Btn>
                <CenterLabel>
                  <Check type="checkbox" />
                  <span>Center linked map on selected hex</span>
                </CenterLabel>
              </BtnGroup>
              <BtnGroup $gap={10} $ml="auto">
                <Btn $w={110}><BookIcon /><span>Form <u>H</u>elp</span></Btn>
                <Btn $w={110}><BookIcon /><span><u>M</u>ap Help</span></Btn>
              </BtnGroup>
            </ActionBar>
          </Content>
        </Body>

        <Rail $right>
          <Bolt />
          <Ratchet />
        </Rail>

        <BottomCorner><Screw /></BottomCorner>
        <BottomRail>
          <Slashes />
          <SlashesRight />
        </BottomRail>
        <BottomCorner><Screw /></BottomCorner>
      </Shell>
    </>
  );
}
